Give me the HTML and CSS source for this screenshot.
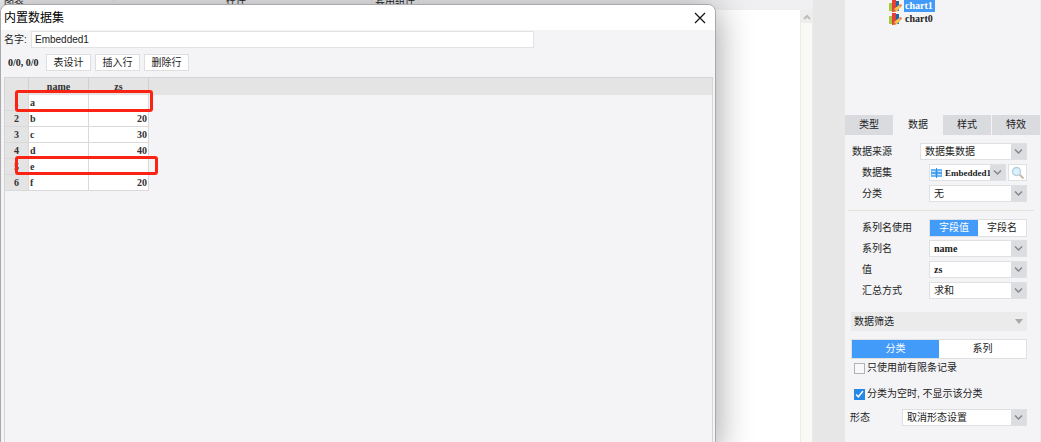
FILE: index.html
```html
<!DOCTYPE html>
<html lang="zh-CN">
<head>
<meta charset="utf-8">
<title>内置数据集</title>
<link rel="stylesheet" href="styles.css">
</head>
<body>
<svg class="defs" aria-hidden="true">
  <symbol id="chevron" viewBox="0 0 9 7"><path d="M1 1.500l3.500 3.500L8 1.500" fill="none" stroke="#85878a" stroke-width="1.500"/></symbol>
  <symbol id="chart" viewBox="0 0 13 13">
    <path d="M0 3h4v8H0z" fill="#a9c93c"/><path d="M3 0h4v12H3z" fill="#e3403c"/><path d="M7 1h3v6H7z" fill="#1c67a8"/><path d="M8 8h2v3H8z" fill="#2f78b4"/>
    <path d="M4 12l1-3 5-4 2 2-5 5z" fill="#f6c04d"/><path d="M10 5l1-1 2 1-1 2z" fill="#ef6b52"/><path d="M4 12l1-3 2 2z" fill="#d9553b"/>
  </symbol>
</svg>
<main class="workspace">
  <div class="ribbon"><span class="ribbon-item">图表</span><span class="ribbon-item wide">控件</span><span class="ribbon-item boxed">套用组件</span></div>
  <div class="canvas">
    <div class="scrollbar"><div class="scroll-up"><svg width="8" height="6" viewBox="0 0 8 6"><path d="M1 5l3-3 3 3" fill="none" stroke="#bdbdbd" stroke-width="2"/></svg></div></div>
  </div>
  <section class="dialog" role="dialog" aria-labelledby="dialog-title">
    <header class="dialog-title">
      <h1 id="dialog-title">内置数据集</h1>
      <button class="close" aria-label="关闭"><svg width="12" height="12" viewBox="0 0 12 12"><path d="M1 1l10 10M11 1L1 11" stroke="#111" stroke-width="1.2"/></svg></button>
    </header>
    <div class="name-row"><label for="name">名字:</label><input id="name" class="name-input" type="text" value="Embedded1"></div>
    <div class="tools"><span class="counter">0/0, 0/0</span><button class="tool">表设计</button><button class="tool">插入行</button><button class="tool">删除行</button></div>
    <div class="sheet">
      <div class="sheet-head">
      <table class="data">
        <thead><tr><th class="num"></th><th>name</th><th>zs</th></tr></thead>
        <tbody>
          <tr><th class="num">1</th><td>a</td><td class="value"></td></tr>
          <tr><th class="num">2</th><td>b</td><td class="value">20</td></tr>
          <tr><th class="num">3</th><td>c</td><td class="value">30</td></tr>
          <tr><th class="num">4</th><td>d</td><td class="value">40</td></tr>
          <tr><th class="num">5</th><td>e</td><td class="value"></td></tr>
          <tr><th class="num">6</th><td>f</td><td class="value">20</td></tr>
        </tbody>
      </table>
      </div>
      <div class="mark mark-first"></div>
      <div class="mark mark-second"></div>
    </div>
  </section>
</main>
<div class="gutter"></div>
<aside class="panel">
  <ul class="tree">
    <li><svg width="13" height="13"><use href="#chart"/></svg><span class="node selected">chart1</span></li>
    <li><svg width="13" height="13"><use href="#chart"/></svg><span class="node">chart0</span></li>
  </ul>
  <nav class="tabs"><button class="tab">类型</button><button class="tab active">数据</button><button class="tab">样式</button><button class="tab">特效</button></nav>
  <div class="fields">
    <div class="field"><label for="source">数据来源</label><span class="select medium"><select id="source"><option>数据集数据</option></select><svg class="arrow"><use href="#chevron"/></svg></span></div>
    <div class="field nested"><label for="dataset">数据集</label><span class="pair"><span class="select short"><svg class="table-icon" width="11" height="10" viewBox="0 0 11 10"><path d="M0 1h5v8H0zM6 1h5v8H6z" fill="#6cb4f8"/><path d="M0 5h11M5.500 0v10" stroke="#3b8fe0"/><path d="M1 3.500h3M7 3.500h3M1 6.500h3M7 6.500h3" stroke="#cfe7ff"/></svg><select id="dataset" class="latin compact"><option>Embedded1</option></select><svg class="arrow"><use href="#chevron"/></svg></span><button class="search" aria-label="预览"><svg width="14" height="14" viewBox="0 0 14 14"><path d="M8.500 8.500l4 4" stroke="#c7b9a8" stroke-width="2"/><circle cx="5.500" cy="5.500" r="4" fill="#dcf0fd" stroke="#b4cfe2" stroke-width="1.300"/></svg></button></span></div>
    <div class="field nested"><label for="category">分类</label><span class="select"><select id="category"><option>无</option></select><svg class="arrow"><use href="#chevron"/></svg></span></div>
  </div>
  <hr class="divider">
  <div class="fields">
    <div class="field nested"><span>系列名使用</span><span class="segment compact-segment"><button class="on">字段值</button><button>字段名</button></span></div>
    <div class="field nested"><label for="series">系列名</label><span class="select"><select id="series" class="latin"><option>name</option></select><svg class="arrow"><use href="#chevron"/></svg></span></div>
    <div class="field nested"><label for="val">值</label><span class="select"><select id="val" class="latin"><option>zs</option></select><svg class="arrow"><use href="#chevron"/></svg></span></div>
    <div class="field nested"><label for="sum">汇总方式</label><span class="select"><select id="sum"><option>求和</option></select><svg class="arrow"><use href="#chevron"/></svg></span></div>
  </div>
  <button class="filter-head">数据筛选<svg width="8" height="5" viewBox="0 0 8 5"><path d="M0 0h8L4 5z" fill="#aaa"/></svg></button>
  <div class="segment wide-segment"><button class="on">分类</button><button>系列</button></div>
  <div class="checks">
    <label><input type="checkbox">只使用前有限条记录</label>
    <label><input type="checkbox" checked>分类为空时, 不显示该分类</label>
  </div>
  <div class="fields"><div class="field last"><label for="form">形态</label><span class="select long"><select id="form"><option>取消形态设置</option></select><svg class="arrow"><use href="#chevron"/></svg></span></div></div>
</aside>
</body>
</html>
```
FILE: styles.css
```css
* { box-sizing: border-box; }
body {
  margin: 0;
  min-height: 100vh;
  display: flex;
  overflow: hidden;
  background: #f4f4f7;
  color: #222;
  font: 10px/14px "Liberation Sans", "Noto Sans CJK SC", sans-serif;
}
button, input, select { font: inherit; color: inherit; margin: 0; }
button { padding: 0; border: 0; background: none; }
.defs { position: absolute; width: 0; height: 0; }

.workspace { position: relative; flex: 1; display: flex; flex-direction: column; min-width: 0; overflow: hidden; }
.ribbon { height: 10px; flex: none; display: flex; align-items: flex-start; overflow: hidden; background: #f0f0f3; }
.ribbon-item { width: 114px; padding-left: 4px; line-height: 1px; border-right: 1px solid #ddd; }
.ribbon-item.wide { width: 258px; padding-left: 112px; }
.ribbon-item.boxed { width: 47px; padding-left: 3px; border-color: #dcdac8; white-space: nowrap; }
.canvas { flex: 1; display: flex; justify-content: flex-end; background: #fff; }
.scrollbar { width: 13px; background: #f9f9f6; border: solid #efede3; border-width: 0 1px; }
.scroll-up { height: 13px; display: flex; align-items: center; justify-content: center; background: #ededed; }
.gutter { width: 32px; flex: none; background: #e7e7e7; }

.dialog {
  position: absolute;
  inset: 4px 97px -10px 0;
  display: flex;
  flex-direction: column;
  overflow: hidden;
  background: #f4f4f7;
  border: 1px solid #a9a9ab;
  border-radius: 8px;
  box-shadow: 0 4px 36px rgba(0, 0, 0, .4);
}
.dialog-title { height: 25px; flex: none; display: flex; align-items: center; justify-content: space-between; padding: 0 9px 0 3px; background: #fff; }
.dialog-title h1 { margin: 0; font-size: 12px; font-weight: 400; color: #000; }
.close { display: flex; }
.name-row { display: flex; align-items: center; gap: 4px; padding: 1px 3px 0; }
.name-row label { width: 23px; white-space: nowrap; }
.name-input { width: 503px; height: 17px; padding: 0 3px; border: 1px solid #e2e2e4; background: #fff; }
.tools { display: flex; align-items: center; gap: 4px; padding: 6px 7px; }
.counter { width: 34px; font: bold 10px/14px "Liberation Serif", serif; white-space: nowrap; }
.tool { width: 45px; height: 17px; line-height: 14px; border: 1px solid #dedee0; background: #fff; }
.sheet { position: relative; flex: 1; margin: 0 2px 0 3px; border: 1px solid #d4d4d6; }
.sheet-head { background: linear-gradient(#e4e4e4 17px, transparent 17px); }
.data { table-layout: fixed; width: 144px; border-collapse: separate; border-spacing: 0; font: bold 10px/12px "Liberation Serif", serif; color: #333; }
.data th, .data td { height: 16px; padding: 1px; border: solid #d9d9d9; border-width: 0 1px 1px 0; overflow: hidden; }
.data thead th { height: 17px; background: #e4e4e4; border-color: #d0d0cc; border-bottom-color: #e4e4e4; vertical-align: bottom; }
.data td { background: #fff; text-align: left; }
.data .num { width: 24px; background: #e4e4e4; text-align: center; }
.data .value { text-align: right; }
.mark { position: absolute; left: 10px; border: 3px solid #fb2414; border-radius: 3px; }
.mark-first { top: 12px; width: 138px; height: 22px; }
.mark-second { top: 78px; width: 143px; height: 19px; }

.panel { width: 196px; flex: none; display: flex; flex-direction: column; background: #f4f4f7; border-right: 1px solid #e9e9ec; }
.tree { list-style: none; height: 115px; flex: none; margin: 0; padding: 0 0 0 44px; }
.tree li { height: 14px; display: flex; align-items: center; gap: 2px; }
.tree li:first-child { height: 12px; }
.node { padding: 0 2px 0 1px; font: bold 10px/12px "Liberation Serif", serif; }
.selected { background: #429bf8; color: #fff; }
.tabs { display: flex; gap: 1px; height: 20px; flex: none; }
.tab { flex: 1; background: #dadbde; }
.tab.active { background: #f4f4f7; }
.fields { display: flex; flex-direction: column; gap: 4px; padding: 8px 13px 0 7px; }
.field { display: flex; align-items: center; justify-content: space-between; height: 17px; }
.nested { padding-left: 10px; }
.select { position: relative; display: flex; align-items: center; width: 98px; height: 17px; background: #fff; border: 1px solid #dfe0e2; }
.select.medium { width: 107px; }
.select.short { width: 77px; }
.select.long { width: 125px; }
.select select { flex: 1; min-width: 0; height: 15px; padding: 0 16px 0 4px; border: 0; background: none; appearance: none; line-height: 14px; }
.arrow { position: absolute; right: 0; top: 0; width: 15px; height: 15px; padding: 4px 3px; background: #dcdde0; pointer-events: none; }
.select .latin { font: bold 10px/14px "Liberation Serif", serif; }
.select .compact { font-size: 9px; padding: 0 0 0 3px; }
.table-icon { flex: none; margin-left: 1px; }
.pair { display: flex; gap: 2px; }
.search { width: 19px; height: 17px; display: flex; align-items: center; justify-content: center; background: #fff; border: 1px solid #dfe0e2; }
.divider { width: 186px; height: 1px; margin: 8px 0 0 3px; border: 0; background: #e3e2d8; }
.segment { display: flex; border: 1px solid #dfe0e2; background: #fff; }
.segment button { flex: 1; }
.segment .on { background: #429bf8; color: #fff; }
.compact-segment { width: 98px; height: 18px; }
.filter-head { display: flex; align-items: center; justify-content: space-between; height: 19px; margin: 13px 13px 0 6px; padding: 0 4px 0 3px; background: #ebebec; }
.wide-segment { height: 20px; margin: 8px 13px 0 6px; }
.checks { display: flex; flex-direction: column; gap: 12px; padding: 2px 0 0 9px; }
.checks label { display: flex; align-items: center; gap: 2px; white-space: nowrap; }
.checks input { appearance: none; width: 11px; height: 11px; border: 1px solid #b3b3b5; background: #f8f8f8; }
.checks input:checked { border-color: #2688e6; background: #2688e6 url("data:image/svg+xml,%3Csvg xmlns='http://www.w3.org/2000/svg' viewBox='0 0 8 8'%3E%3Cpath d='M1 4l2 2 4-5' fill='none' stroke='white' stroke-width='1.4'/%3E%3C/svg%3E"); }
.last { margin: 0 0 0 -2px; }
```
